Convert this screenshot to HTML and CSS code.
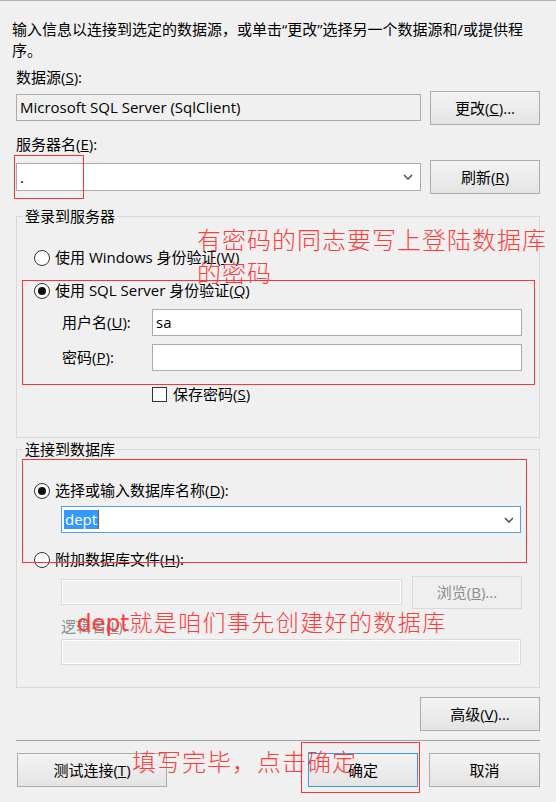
FILE: index.html
```html
<!DOCTYPE html>
<html lang="zh-CN">
<head>
  <meta charset="UTF-8">
  <title>连接属性</title>
  <link rel="stylesheet" href="styles.css">
</head>
<body>
  <div class="dialog">
    <p class="intro">输入信息以连接到选定的数据源，或单击“更改”选择另一个数据源和/或提供程序。</p>

    <div class="label">数据源(<u>S</u>):</div>
    <div class="row">
      <div class="field readonly">Microsoft SQL Server (SqlClient)</div>
      <button class="btn">更改(<u>C</u>)...</button>
    </div>

    <div class="label server">服务器名(<u>E</u>):</div>
    <div class="row server">
      <div class="field combo">
        <span>.</span>
        <svg class="chevron" width="10" height="6" viewBox="0 0 10 6"><polyline points="1,1 5,5 9,1" fill="none" stroke="#555" stroke-width="1.6"/></svg>
      </div>
      <button class="btn">刷新(<u>R</u>)</button>
    </div>

    <fieldset class="group login">
      <legend>登录到服务器</legend>
      <div class="group-body">
        <div class="radio first"><span class="dot"></span>使用 Windows 身份验证(<u>W</u>)</div>
        <div class="radio second"><span class="dot on"></span>使用 SQL Server 身份验证(<u>Q</u>)</div>
        <div class="cred">
          <span class="cred-label">用户名(<u>U</u>):</span>
          <div class="input">sa</div>
        </div>
        <div class="cred next">
          <span class="cred-label">密码(<u>P</u>):</span>
          <div class="input"></div>
        </div>
        <div class="check"><span class="box"></span>保存密码(<u>S</u>)</div>
      </div>
    </fieldset>

    <fieldset class="group database">
      <legend>连接到数据库</legend>
      <div class="group-body">
        <div class="radio first"><span class="dot on"></span>选择或输入数据库名称(<u>D</u>):</div>
        <div class="input db-combo">
          <span class="selected">dept</span><span class="caret"></span>
          <svg class="chevron" width="10" height="6" viewBox="0 0 10 6"><polyline points="1,1 5,5 9,1" fill="none" stroke="#555" stroke-width="1.6"/></svg>
        </div>
        <div class="radio attach"><span class="dot"></span>附加数据库文件(<u>H</u>):</div>
        <div class="file-row">
          <div class="input disabled file"></div>
          <button class="btn disabled">浏览(<u>B</u>)...</button>
        </div>
        <div class="logic-label">逻辑名(<u>L</u>):</div>
        <div class="input disabled logic"></div>
      </div>
    </fieldset>

    <div class="advanced">
      <button class="btn wide">高级(<u>V</u>)...</button>
    </div>

    <div class="separator"></div>

    <div class="footer">
      <button class="btn test">测试连接(<u>T</u>)</button>
      <button class="btn ok">确定</button>
      <button class="btn cancel">取消</button>
    </div>
  </div>

  <!-- red annotations drawn on top of the screenshot -->
  <div class="mark mark-server"></div>
  <div class="mark mark-login"></div>
  <div class="mark mark-db"></div>
  <div class="mark mark-ok"></div>
  <div class="note note-login">有密码的同志要写上登陆数据库的密码</div>
  <div class="note note-db"><span class="latin">dept</span>就是咱们事先创建好的数据库</div>
  <div class="note note-ok">填写完毕，点击确定</div>
</body>
</html>
```

FILE: styles.css
```css
* {
  box-sizing: border-box;
}

body {
  margin: 0;
  height: 802px;
  overflow: hidden;
  position: relative;
  background-color: #f0f0f0;
  border-top: 1px solid #b4b4b4;
  font-family: "Open Sans", "Noto Sans CJK SC", sans-serif;
  font-size: 15px;
  line-height: 21px;
  color: #000;
}

.dialog {
  padding: 18px 16px 0 16px;
}

.intro {
  margin: 0 0 0 -4px;
  width: 520px;
}

.label {
  margin-top: 6px;
}

.label.server {
  margin-top: 9px;
}

.row {
  display: flex;
  justify-content: space-between;
  margin-top: 3px;
}

.row.server {
  margin-top: 5px;
}

.field {
  width: 405px;
  height: 27px;
  margin-top: 3px;
  padding: 0 3px;
  display: flex;
  align-items: center;
  border: 1px solid #ababab;
  background-color: #fff;
}

.field.readonly {
  background-color: #f0f0f0;
}

.field.combo {
  height: 28px;
}

.chevron {
  margin-left: auto;
  margin-right: 4px;
}

.btn {
  width: 110px;
  height: 34px;
  padding: 0;
  border: 1px solid #acacac;
  background: linear-gradient(#f3f3f3, #e4e4e4);
  font: inherit;
  color: #000;
}

.btn.disabled {
  height: 33px;
  border-color: #d9d9d9;
  background: #efefef;
  color: #8c8c8c;
}

/* group boxes */
.group {
  margin: 12px 0 0 0;
  padding: 0;
  min-width: 0;
  border: 1px solid #d9d9d9;
}

.group.database {
  margin-top: 1px;
}

.group legend {
  margin-left: 6px;
  padding: 0 2px;
  line-height: 21px;
}

.group-body {
  padding: 0 0 32px 17px;
}

.database .group-body {
  padding-bottom: 22px;
}

.radio {
  display: flex;
  align-items: center;
  margin-top: 12px;
}

.radio.first {
  margin-top: 20px;
}

.radio.attach {
  margin-top: 16px;
}

.dot {
  width: 16px;
  height: 16px;
  margin-right: 5px;
  display: flex;
  align-items: center;
  justify-content: center;
  border: 1px solid #333;
  border-radius: 50%;
  background-color: #fff;
}

.dot.on::after {
  content: '';
  width: 8px;
  height: 8px;
  border-radius: 50%;
  background-color: #111;
}

.cred {
  display: flex;
  align-items: center;
  margin-top: 8px;
  padding-left: 28px;
}

.cred-label {
  width: 90px;
}

.input {
  width: 370px;
  height: 27px;
  padding: 0 3px;
  display: flex;
  align-items: center;
  border: 1px solid #ababab;
  background-color: #fff;
}

.check {
  display: flex;
  align-items: center;
  margin-top: 13px;
  margin-left: 118px;
}

.box {
  width: 15px;
  height: 15px;
  margin-right: 6px;
  border: 1px solid #333;
  background-color: #fff;
}

.db-combo {
  width: 460px;
  margin-top: 5px;
  margin-left: 27px;
  padding: 0 2px;
  border-color: #569de5;
}

.selected {
  background-color: #3399ff;
  color: #fff;
  padding: 0 1px;
  line-height: 19px;
}

.caret {
  width: 1px;
  height: 19px;
  background-color: #8a5a2b;
}

.file-row {
  display: flex;
  margin-top: 6px;
  margin-left: 27px;
}

.input.disabled {
  height: 26px;
  border-color: #d9d9d9;
  background-color: #f0f0f0;
  box-shadow: inset 0 0 0 1px #fff;
}

.input.file {
  width: 341px;
  margin-top: 3px;
  margin-right: 10px;
}

.logic-label {
  margin-top: 7px;
  margin-left: 27px;
  color: #8c8c8c;
}

.input.logic {
  width: 460px;
  margin-top: 2px;
  margin-left: 27px;
}

.advanced {
  display: flex;
  justify-content: flex-end;
  margin-top: 9px;
}

.btn.wide {
  width: 120px;
}

.separator {
  height: 1px;
  margin-top: 9px;
  background-color: #a0a0a0;
}

.footer {
  display: flex;
  margin-top: 12px;
}

.btn.test {
  width: 150px;
  margin-left: 1px;
}

.btn.ok {
  margin-left: auto;
  border-color: #3c9be8;
}

.btn.cancel {
  width: 111px;
  margin-left: 11px;
}

/* annotations */
.mark {
  position: absolute;
  border: 1px solid #f33;
}

.mark-server {
  left: 14px;
  top: 154px;
  width: 70px;
  height: 44px;
}

.mark-login {
  left: 22px;
  top: 279px;
  width: 513px;
  height: 105px;
}

.mark-db {
  left: 22px;
  top: 458px;
  width: 505px;
  height: 104px;
}

.mark-ok {
  left: 301px;
  top: 741px;
  width: 119px;
  height: 51px;
}

.note {
  position: absolute;
  color: #ff3b3b;
  font-family: "Noto Sans CJK SC", sans-serif;
  font-weight: 300;
  font-size: 24px;
  letter-spacing: 1px;
  line-height: 33px;
}

.note-login {
  left: 197px;
  top: 221px;
  width: 356px;
}

.note-db {
  left: 77px;
  top: 604px;
  font-size: 23px;
  letter-spacing: 1.4px;
}

.note-db .latin {
  font-family: "DejaVu Sans", sans-serif;
  font-weight: normal;
  letter-spacing: 0;
}

.note-ok {
  left: 132px;
  top: 743px;
}
```
